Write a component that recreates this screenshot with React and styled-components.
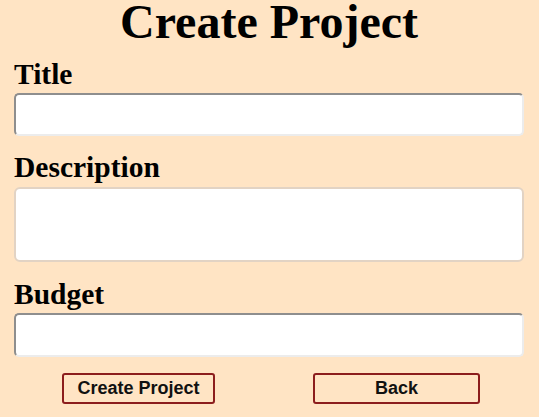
import React from "react";
import styled, { createGlobalStyle } from "styled-components";

const GlobalStyle = createGlobalStyle`
  html, body {
    margin: 0;
    padding: 0;
    background: #ffe4c4;
  }
`;

const App = () => {
  return (
    <>
      <GlobalStyle />
      <Container>
        <Heading>Create Project</Heading>
        <Form onSubmit={(e) => e.preventDefault()}>
          <Label htmlFor="title">Title</Label>
          <TextInput id="title" type="text" />
          <Label htmlFor="description">Description</Label>
          <TextArea id="description" />
          <Label htmlFor="budget" $gap={16}>
            Budget
          </Label>
          <TextInput id="budget" type="number" $height={44} />
          <ButtonRow>
            <Button type="submit" $width={153}>
              Create Project
            </Button>
            <Button type="button" $width={167}>
              Back
            </Button>
          </ButtonRow>
        </Form>
      </Container>
    </>
  );
};

export default App;

const Container = styled.div`
  padding: 0 15px 0 14px;
  font-family: "Liberation Serif", "Times New Roman", serif;
  color: #000;
`;
const Heading = styled.h1`
  margin: 0;
  padding-top: 1px;
  text-align: center;
  font-size: 48px;
  line-height: 42px;
  font-weight: 700;
`;
const Form = styled.form`
  display: flex;
  flex-direction: column;
`;
const Label = styled.label`
  display: block;
  margin-top: ${(p) => p.$gap || 15}px;
  font-size: 29.5px;
  line-height: 32px;
  font-weight: 700;
`;
const TextInput = styled.input`
  box-sizing: border-box;
  margin: 3px 0 0;
  width: 100%;
  height: ${(p) => p.$height || 43}px;
  padding: 4px 8px;
  background: #fff;
  border-style: solid;
  border-width: 2px;
  border-color: #8e8e8e #ececec #ececec #8e8e8e;
  border-radius: 5px;
  font-family: "Liberation Sans", Arial, sans-serif;
  font-size: 16px;
  outline: none;
  -moz-appearance: textfield;
  &::-webkit-outer-spin-button,
  &::-webkit-inner-spin-button {
    -webkit-appearance: none;
    margin: 0;
  }
`;
const TextArea = styled.textarea`
  box-sizing: border-box;
  display: block;
  margin: 4px 0 0;
  width: 100%;
  height: 75px;
  padding: 6px 8px;
  background: #fff;
  border: 2px solid #e2d3c4;
  border-radius: 6px;
  resize: none;
  font-family: "Liberation Sans", Arial, sans-serif;
  font-size: 16px;
  outline: none;
`;
const ButtonRow = styled.div`
  display: flex;
  justify-content: space-between;
  margin-top: 16px;
  padding: 0 44px 0 48px;
`;
const Button = styled.button`
  box-sizing: border-box;
  width: ${(p) => p.$width}px;
  height: 31px;
  padding: 0;
  background: transparent;
  border: 2px solid #8c1d1d;
  border-radius: 3px;
  color: #111;
  font-family: "Liberation Sans", Arial, sans-serif;
  font-size: 18px;
  font-weight: 700;
  cursor: pointer;
`;
